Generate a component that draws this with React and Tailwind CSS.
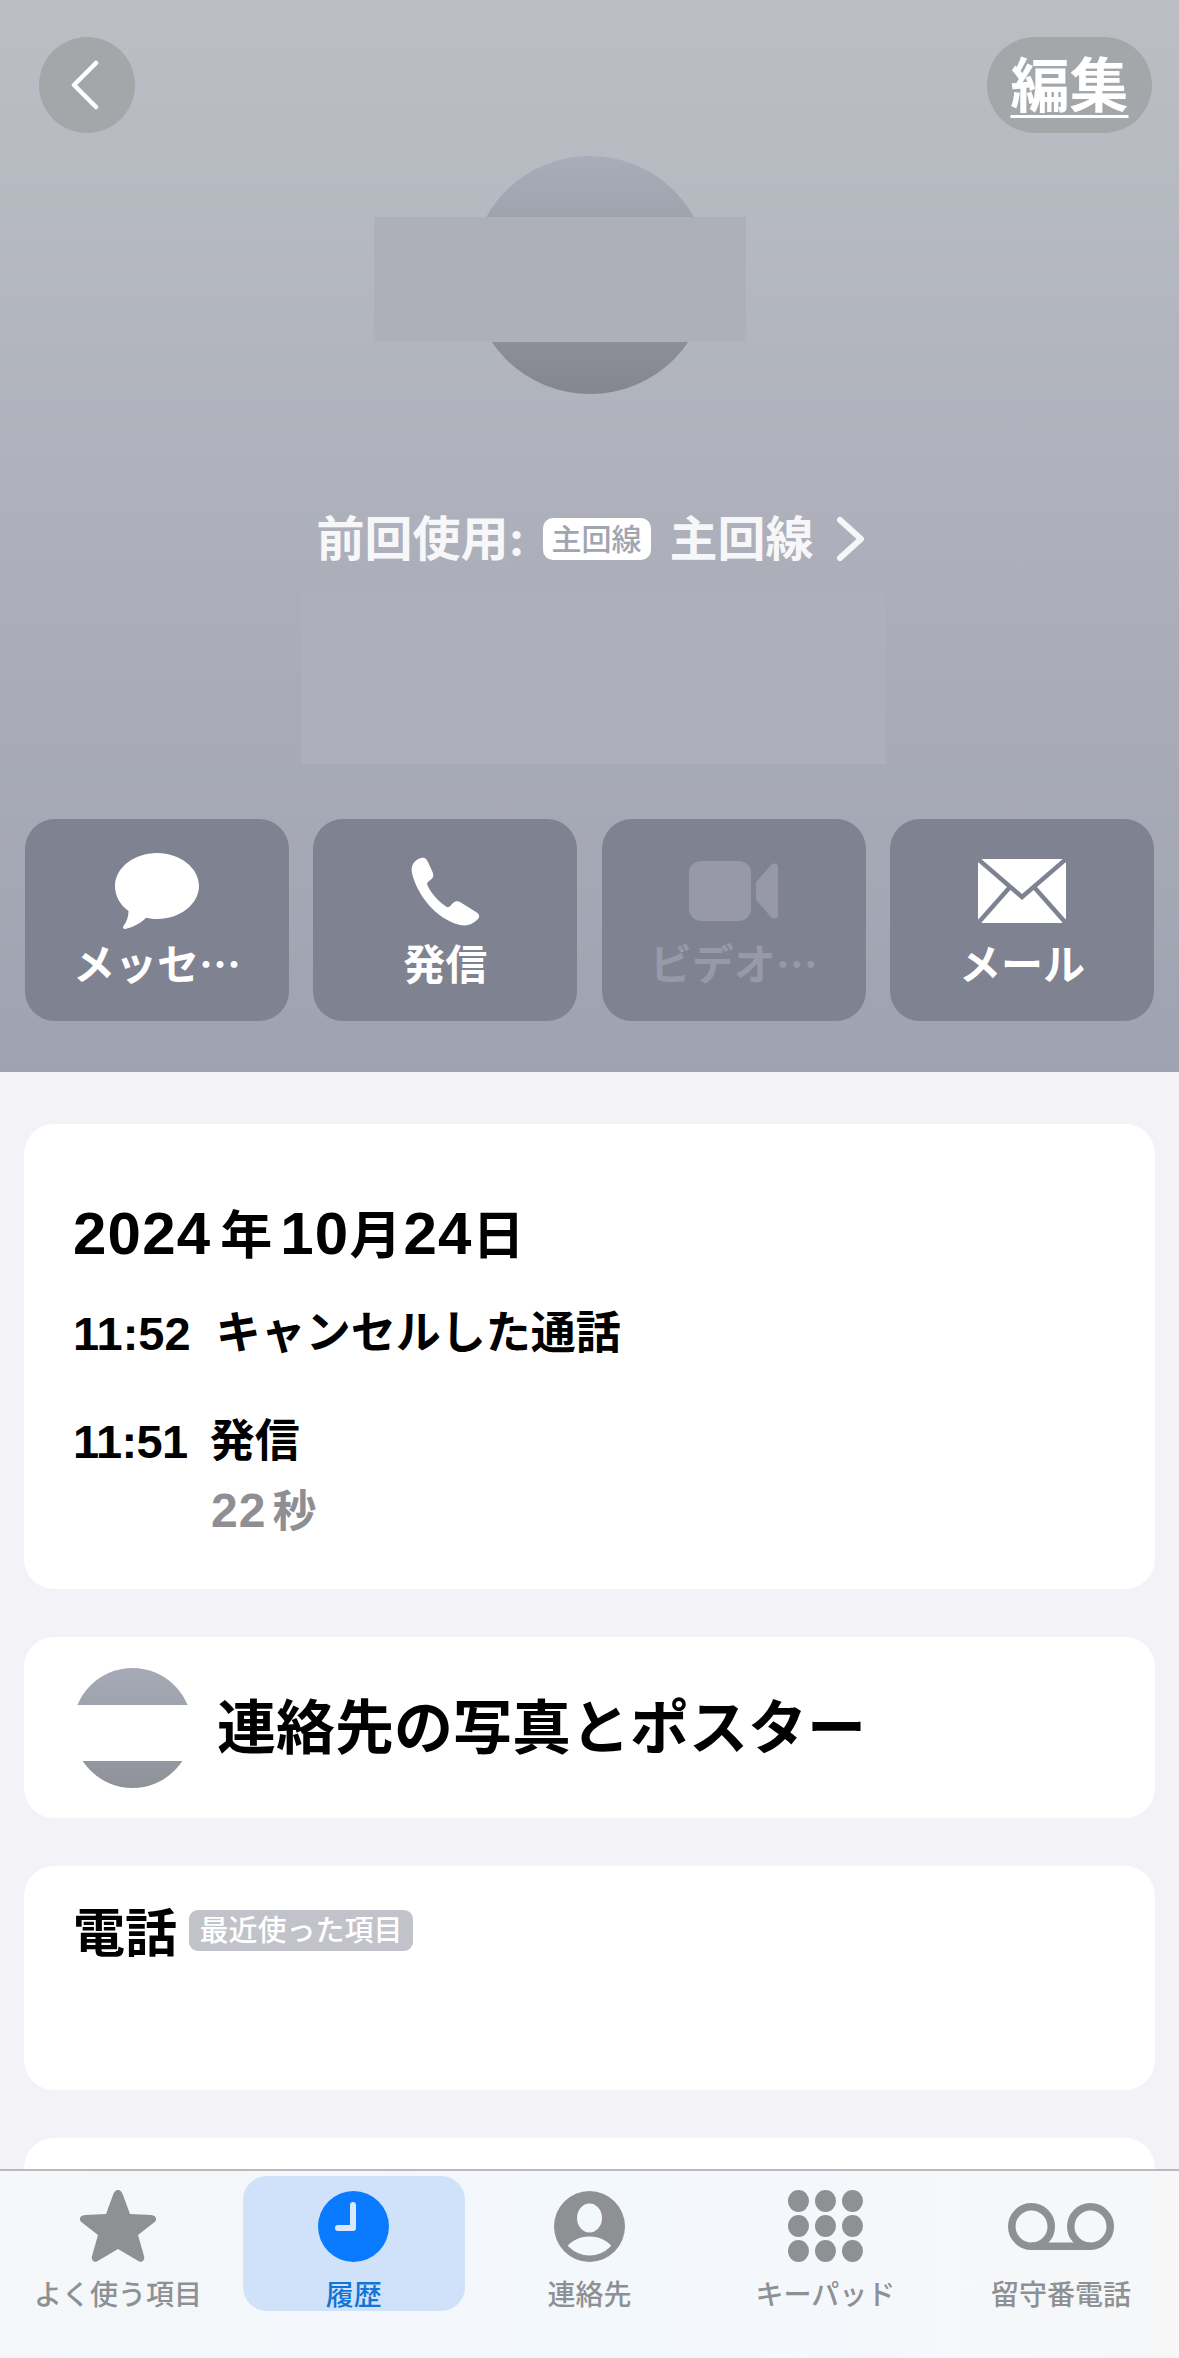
const FONT = { fontFamily: '"Inter", "Noto Sans CJK JP", sans-serif' };

function ActionButton({ label, dim, children }) {
  return (
    <div className="flex h-[202px] w-[264px] flex-col items-center rounded-[30px] bg-[#7f8291]">
      <div className="mt-[30px] flex h-[84px] w-full items-center justify-center">{children}</div>
      <div className={`mt-[1px] font-['Noto_Sans_CJK_JP'] text-[42px] leading-[56px] font-semibold ${dim ? 'text-[#9799a8]' : 'text-white'}`}>{label}</div>
    </div>
  );
}

function Tab({ label, active, children }) {
  return (
    <div className={`mx-[7px] flex h-[135px] flex-col items-center rounded-[24px] ${active ? 'bg-[#cfe2fa]' : ''}`}>
      <div className="mt-[14px] flex h-[72px] w-full items-center justify-center">{children}</div>
      <div className={`mt-[17px] whitespace-nowrap text-[28px] leading-[32px] font-medium ${active ? 'text-[#0f75d8]' : 'text-[#8e9094]'}`}>{label}</div>
    </div>
  );
}

export default function App() {
  return (
    <div style={FONT} className="flex h-[2358px] w-[1179px] flex-col overflow-hidden bg-[#f2f2f7]">
      <div className="min-h-0 flex-1 overflow-hidden">
        <header className="flex h-[1072px] flex-col bg-gradient-to-b from-[#bbbfc4] via-[#adb0bb] to-[#9fa2b0] pt-[37px]">
          <div className="flex items-center justify-between pr-[27px] pl-[39px]">
            <div className="flex h-[96px] w-[96px] items-center justify-center rounded-full bg-[#a3a7aa]">
              <svg className="mr-[4px]" width="30" height="50" viewBox="0 0 30 50" fill="none" stroke="white" strokeWidth="4.5" strokeLinecap="round" strokeLinejoin="round">
                <path d="M26 3 L4 25 L26 47" />
              </svg>
            </div>
            <div className="flex h-[96px] w-[165px] items-center justify-center rounded-full bg-[#a3a7aa] text-[59px] leading-none font-semibold text-white underline decoration-[3px] underline-offset-[8px]">編集</div>
          </div>

          <div className="relative mx-auto mt-[23px] h-[238px] w-[238px] rounded-full bg-gradient-to-b from-[#a9adb9] to-[#84878f]">
            <div className="absolute top-[61px] left-[-97px] h-[125px] w-[372px] bg-[#adb0b9]" />
          </div>

          <div className="mt-[121px] ml-[2px] flex h-[48px] items-center justify-center text-[48px] leading-none font-bold text-[#f7f7f9]">
            <span>前回使用:</span>
            <span className="ml-[18px] flex h-[42px] w-[108px] items-center justify-center rounded-[10px] bg-white text-[30px] font-medium text-[#a2a5b0]">主回線</span>
            <span className="ml-[19px]">主回線</span>
            <svg className="ml-[22px]" width="29" height="46" viewBox="0 0 29 46" fill="none" stroke="#f7f7f9" strokeWidth="6" strokeLinecap="round" strokeLinejoin="round">
              <path d="M4 4 L25 23 L4 42" />
            </svg>
          </div>

          <div className="mt-[29px] ml-[301px] h-[172px] w-[585px] bg-[#adb0ba]" />

          <div className="mt-[55px] flex justify-between pr-[25px] pl-[25px]">
            <ActionButton label="メッセ…">
              <svg width="84" height="76" viewBox="0 0 84 76" fill="white">
                <path d="M42 0 C65 0 84 15 84 33 C84 51 65 66 42 66 C38 66 35 65.6 31 64.8 C27 69 18 75 10 76 C8 76 7.5 74.5 8.5 73 C11.5 69 13.5 64 13.5 58 C5 52 0 43 0 33 C0 15 19 0 42 0 Z" />
              </svg>
            </ActionButton>
            <ActionButton label="発信">
              <svg width="69" height="69" viewBox="0 0 69 69" fill="white">
                <path d="M10 1 C13 0 15 1 16.5 4 L21.5 15 C23 18 22.5 20.5 20 22.5 L17.5 24.5 C16 25.7 15.8 27 16.5 28.5 C20 36 27 44 35 49.5 C36.5 50.5 38 50.3 39.3 49 L42 46 C44 44 46.5 43.5 49 45 L65 55 C68.5 57 69 60 67 62 C62 67.5 56 69.5 49 68 C25 62 6 38 1 16 C-0.5 9 3 3 10 1 Z" />
              </svg>
            </ActionButton>
            <ActionButton label="ビデオ…" dim>
              <svg width="89" height="60" viewBox="0 0 89 60" fill="#9799a8">
                <rect x="0" y="0" width="62" height="60" rx="12" />
                <path d="M67 21 L82 4 C85 1 89 2.5 89 6 L89 54 C89 57.5 85 59 82 56 L67 39 Z" />
              </svg>
            </ActionButton>
            <ActionButton label="メール">
              <svg width="88" height="64" viewBox="0 0 88 64">
                <rect x="0" y="0" width="88" height="64" rx="5" fill="white" />
                <path d="M1 1 L44 38 L87 1 M1 63 L32 28 M87 63 L56 28" fill="none" stroke="#7f8291" strokeWidth="4.5" />
              </svg>
            </ActionButton>
          </div>
        </header>

        <main className="flex flex-col gap-[48px] px-[24px] pt-[52px]">
          <section className="h-[465px] rounded-[30px] bg-white pt-[78px] pl-[49px] text-black">
            <div className="flex items-baseline font-['Liberation_Sans','Noto_Sans_CJK_JP',sans-serif] text-[60px] leading-[64px] font-bold">
              <span className="tracking-[1.2px]">2024</span>
              <span className="ml-[9px] text-[52px] font-semibold">年</span>
              <span className="ml-[8px] tracking-[1.2px]">10</span>
              <span className="text-[52px] font-semibold">月</span>
              <span className="ml-[2px] tracking-[1.2px]">24</span>
              <span className="text-[52px] font-semibold">日</span>
            </div>
            <div className="mt-[34px] flex gap-[25px] font-['Liberation_Sans','Noto_Sans_CJK_JP',sans-serif] text-[45px] leading-[64px] font-bold">
              <span className="text-[47px]">11:52</span>
              <span>キャンセルした通話</span>
            </div>
            <div className="mt-[44px] flex gap-[22px] font-['Liberation_Sans','Noto_Sans_CJK_JP',sans-serif] text-[45px] leading-[64px] font-bold">
              <span className="text-[47px] tracking-[-0.6px]">11:51</span>
              <span>発信</span>
            </div>
            <div className="mt-[5px] ml-[138px] flex items-baseline font-['Liberation_Sans','Noto_Sans_CJK_JP',sans-serif] text-[48px] leading-[64px] font-bold text-[#8e8e93]">
              <span className="tracking-[1px]">22</span>
              <span className="ml-[6px] text-[44px]">秒</span>
            </div>
          </section>

          <section className="flex h-[181px] items-center gap-[25px] rounded-[30px] bg-white pl-[49px]">
            <div className="relative h-[120px] w-[119px] shrink-0 rounded-full bg-gradient-to-b from-[#a6aab6] to-[#8f9299]">
              <div className="absolute top-[37px] right-[-4px] left-[-4px] h-[56px] bg-white" />
            </div>
            <div className="text-[59px] leading-none font-semibold whitespace-nowrap text-black">連絡先の写真とポスター</div>
          </section>

          <section className="h-[224px] rounded-[30px] bg-white pt-[38px] pl-[49px]">
            <div className="flex h-[60px] items-center">
              <span className="text-[52px] leading-none font-semibold text-black">電話</span>
              <span className="mb-[8px] ml-[12px] flex h-[41px] w-[224px] items-center justify-center rounded-[9px] bg-[#c2c3ca] text-[29px] leading-none font-medium whitespace-nowrap text-white">最近使った項目</span>
            </div>
          </section>

          <section className="h-[200px] rounded-[30px] bg-white" />
        </main>
      </div>

      <nav className="h-[189px] shrink-0 border-t-2 border-[#b9b9bc] bg-gradient-to-r from-[#f5f7f9] via-[#f3f8fd] to-[#f7f7f8] pt-[5px]">
        <div className="grid grid-cols-5">
          <Tab label="よく使う項目">
            <svg width="78" height="74" viewBox="0 0 78 74" fill="#8e9094">
              <path d="M39 1 C41.5 1 43 3 44 6 L51 25 L72 26 C77 26.3 79 30.5 75 33.5 L59 46 L65 67 C66.3 71.5 62.5 74.5 58.5 71.5 L39 60 L19.5 71.5 C15.5 74.5 11.7 71.5 13 67 L19 46 L3 33.5 C-1 30.5 1 26.3 6 26 L27 25 L34 6 C35 3 36.5 1 39 1 Z" />
            </svg>
          </Tab>
          <Tab label="履歴" active>
            <svg width="71" height="71" viewBox="0 0 71 71">
              <circle cx="35.5" cy="35.5" r="35.5" fill="#0a7aff" />
              <path d="M35 14 L35 37 L20 37" fill="none" stroke="#d8e8fa" strokeWidth="6" strokeLinecap="round" strokeLinejoin="round" />
            </svg>
          </Tab>
          <Tab label="連絡先">
            <svg width="71" height="71" viewBox="0 0 71 71">
              <defs>
                <clipPath id="personClip"><circle cx="35.5" cy="35.5" r="29" /></clipPath>
              </defs>
              <circle cx="35.5" cy="35.5" r="35.5" fill="#8e9094" />
              <ellipse cx="35.5" cy="27" rx="12.5" ry="14.5" fill="#f3f8fd" />
              <path d="M8 64 C13 51 24 45.5 35.5 45.5 C47 45.5 58 51 63 64 C56 70 46 71 35.5 66 C25 71 15 70 8 64 Z" fill="#f3f8fd" clipPath="url(#personClip)" />
            </svg>
          </Tab>
          <Tab label="キーパッド">
            <svg width="75" height="72" viewBox="0 0 75 72" fill="#8e9094">
              <ellipse cx="10.5" cy="11" rx="10.5" ry="11" />
              <ellipse cx="37.5" cy="11" rx="10.5" ry="11" />
              <ellipse cx="64.5" cy="11" rx="10.5" ry="11" />
              <ellipse cx="10.5" cy="36" rx="10.5" ry="11" />
              <ellipse cx="37.5" cy="36" rx="10.5" ry="11" />
              <ellipse cx="64.5" cy="36" rx="10.5" ry="11" />
              <ellipse cx="10.5" cy="61" rx="10.5" ry="11" />
              <ellipse cx="37.5" cy="61" rx="10.5" ry="11" />
              <ellipse cx="64.5" cy="61" rx="10.5" ry="11" />
            </svg>
          </Tab>
          <Tab label="留守番電話">
            <svg width="106" height="47" viewBox="0 0 106 47" fill="none" stroke="#8e9094" strokeWidth="7.5">
              <circle cx="23.5" cy="23.5" r="19.75" />
              <circle cx="82.5" cy="23.5" r="19.75" />
              <path d="M23.5 43.25 L82.5 43.25" />
            </svg>
          </Tab>
        </div>
      </nav>
    </div>
  );
}
